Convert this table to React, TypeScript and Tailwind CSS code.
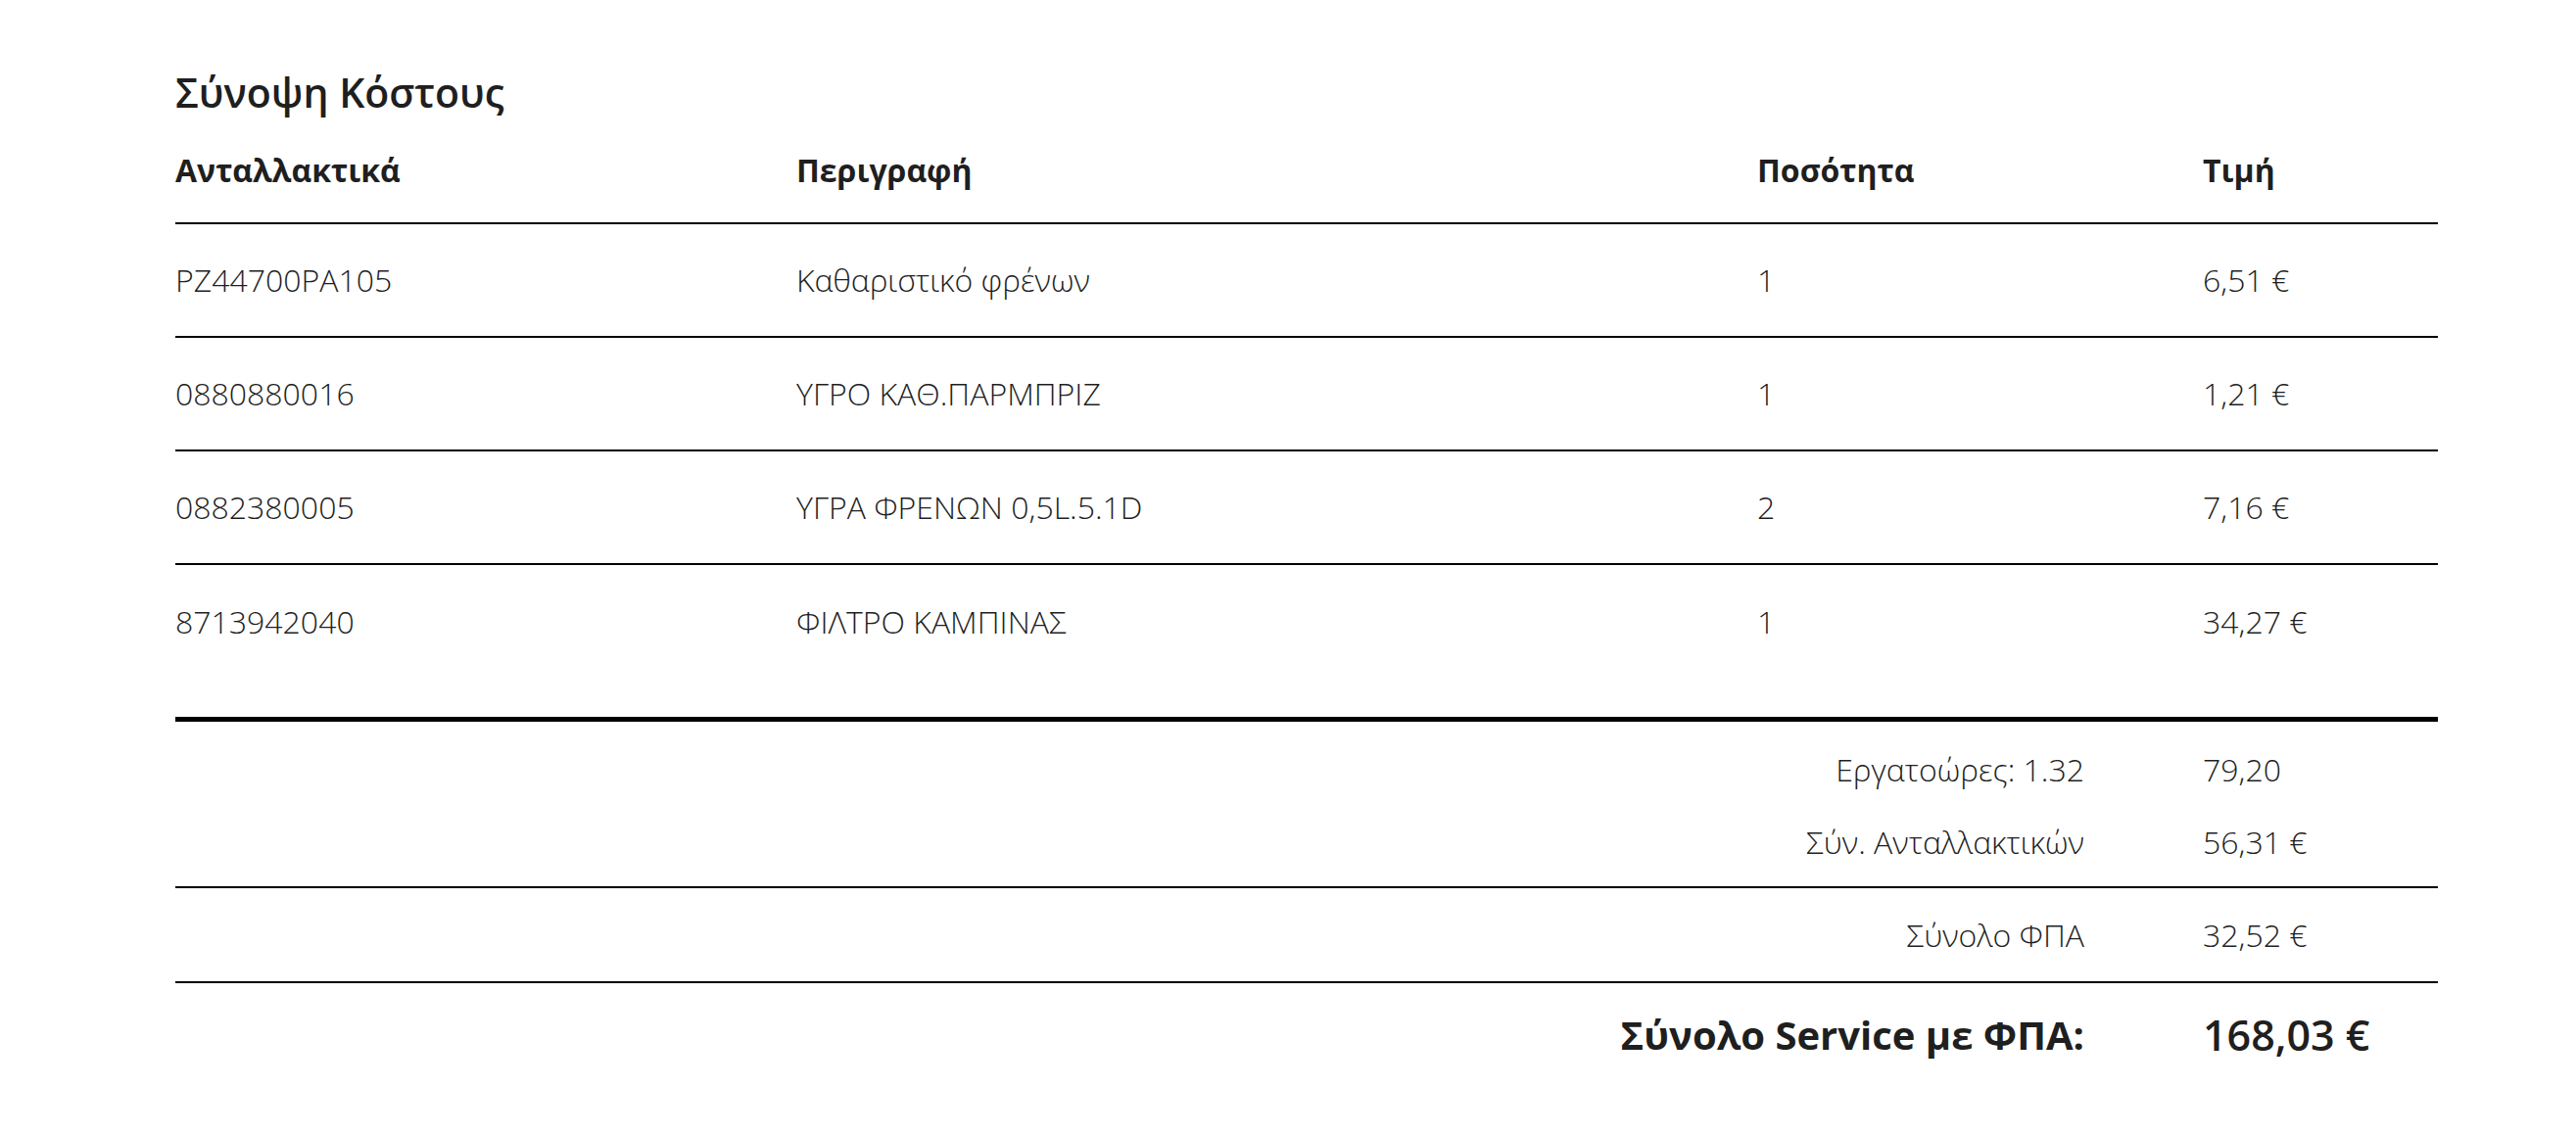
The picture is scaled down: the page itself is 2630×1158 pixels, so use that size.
const parts = [
  { code: 'PZ44700PA105', desc: 'Καθαριστικό φρένων', qty: '1', price: '6,51 €' },
  { code: '0880880016', desc: 'ΥΓΡΟ ΚΑΘ.ΠΑΡΜΠΡΙΖ', qty: '1', price: '1,21 €' },
  { code: '0882380005', desc: 'ΥΓΡΑ ΦΡΕΝΩΝ 0,5L.5.1D', qty: '2', price: '7,16 €' },
  { code: '8713942040', desc: 'ΦΙΛΤΡΟ ΚΑΜΠΙΝΑΣ', qty: '1', price: '34,27 €' },
]

const cols = 'grid grid-cols-[634px_981px_455px_1fr]'

function SummaryRow({ label, value, className = '' }: { label: string; value: string; className?: string }) {
  return (
    <div className={`flex items-center ${className}`}>
      <div className="flex-1 text-right pr-[121px]">{label}</div>
      <div className="w-[240px]">{value}</div>
    </div>
  )
}

export default function App() {
  return (
    <div className="min-h-screen bg-white font-['Open_Sans',sans-serif] text-[#1f1f1f]">
      <div className="pl-[179px] pr-[141px] pt-[70px]">
        <h2 className="text-[41px] leading-[48px] font-semibold mb-[36px]">Σύνοψη Κόστους</h2>

        <div className={`${cols} text-[32px] leading-[40px] font-bold pb-[33px] border-b-2 border-black`}>
          <div>Ανταλλακτικά</div>
          <div>Περιγραφή</div>
          <div>Ποσότητα</div>
          <div>Τιμή</div>
        </div>

        <div className="text-[32px] font-light">
          {parts.map((p, i) => (
            <div
              key={p.code}
              className={`${cols} h-[116px] items-center ${i < parts.length - 1 ? 'border-b-2 border-black' : ''}`}
            >
              <div>{p.code}</div>
              <div>{p.desc}</div>
              <div>{p.qty}</div>
              <div>{p.price}</div>
            </div>
          ))}
        </div>

        <div className="mt-[39px] border-t-[5px] border-black text-[32px] font-light">
          <div className="pt-[12px] pb-[8px] border-b-2 border-black">
            <SummaryRow label="Εργατοώρες: 1.32" value="79,20" className="h-[74px]" />
            <SummaryRow label="Σύν. Ανταλλακτικών" value="56,31 €" className="h-[74px]" />
          </div>
          <div className="border-b-2 border-black">
            <SummaryRow label="Σύνολο ΦΠΑ" value="32,52 €" className="h-[95px]" />
          </div>
          <div className="flex items-center h-[106px]">
            <div className="flex-1 text-right pr-[121px] text-[40px] font-bold">Σύνολο Service με ΦΠΑ:</div>
            <div className="w-[240px] text-[43px] font-semibold">168,03 €</div>
          </div>
        </div>
      </div>
    </div>
  )
}
